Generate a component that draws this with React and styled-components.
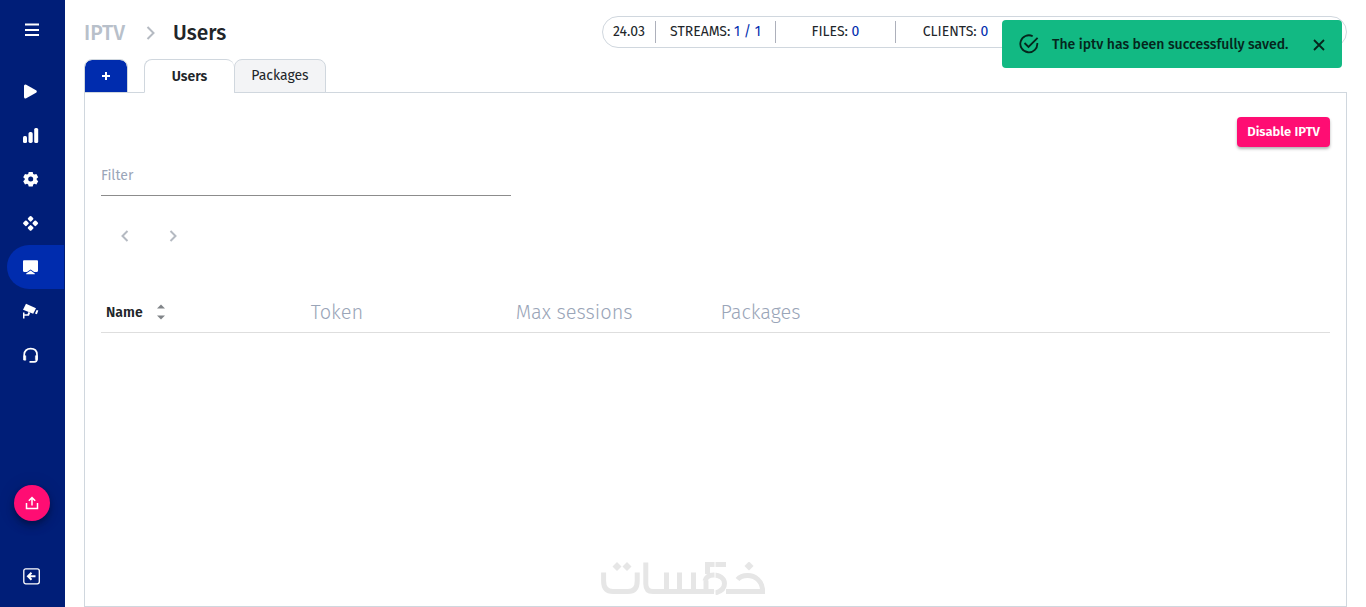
import React, { useState } from 'react';
import styled, { createGlobalStyle } from 'styled-components';

const GlobalStyle = createGlobalStyle`
  * {
    box-sizing: border-box;
  }
  body {
    margin: 0;
    background: #fff;
    color: #212529;
    font-family: "Fira Sans", Roboto, "Noto Sans", sans-serif;
    font-size: 14px;
    line-height: 20px;
  }
  button, input {
    font-family: inherit;
    font-size: inherit;
    color: inherit;
  }
  button {
    border: 0;
    padding: 0;
    background: none;
    cursor: pointer;
  }
  a {
    color: inherit;
    text-decoration: none;
  }
  svg {
    display: block;
  }
`;

const Layout = styled.div`
  display: flex;
  min-height: 100vh;
`;

const Sidebar = styled.aside`
  display: flex;
  flex-direction: column;
  align-items: center;
  flex: 0 0 65px;
  padding: 20px 1px 20px 0;
  background: #001e78;
  color: #fff;
`;

const MenuButton = styled.button`
  display: flex;
  align-items: center;
  justify-content: center;
  width: 40px;
  height: 20px;
`;

const Nav = styled.nav`
  align-self: stretch;
  display: flex;
  flex-direction: column;
  flex: 1;
  padding-left: 7px;
  margin-top: 29px;
`;

const NavLink = styled.a`
  display: flex;
  align-items: center;
  height: 44px;
  padding-left: 16px;
  border-radius: 22px 0 0 22px;
  background: ${({ $active }) => ($active ? '#002cae' : 'transparent')};
`;

const UploadButton = styled.button`
  display: flex;
  align-items: center;
  justify-content: center;
  width: 36px;
  height: 36px;
  margin-bottom: 46px;
  border-radius: 50%;
  background: #ff0d73;
  box-shadow: 0 3px 5px rgba(0, 0, 0, 0.2), 0 6px 10px rgba(0, 0, 0, 0.14), 0 1px 18px rgba(0, 0, 0, 0.12);
`;

const Main = styled.main`
  display: flex;
  flex-direction: column;
  flex: 1;
  min-width: 0;
  padding: 16px 19px 0;
`;

const Header = styled.header`
  display: flex;
  justify-content: space-between;
  align-items: center;
  height: 32px;
`;

const Breadcrumb = styled.div`
  display: flex;
  align-items: center;
  gap: 16px;
  padding-top: 2px;
  font-size: 21px;
  line-height: 32px;
  font-weight: 500;

  a {
    color: #b8c0ca;
  }
  h1 {
    margin: 0;
    font: inherit;
  }
`;

const StatusBar = styled.div`
  display: flex;
  align-items: center;
  flex: 0 1 745px;
  height: 32px;
  border: 1px solid #d0d7de;
  border-radius: 16px;
`;

const Status = styled.div`
  flex: 0 0 ${({ $width }) => $width || 120}px;
  border-right: 1px solid ${({ $last }) => ($last ? 'transparent' : '#adb0bb')};
  text-align: center;
  line-height: 22px;

  span {
    color: #002cae;
  }
`;

const Tabs = styled.div`
  position: relative;
  display: flex;
  align-items: flex-end;
  margin-top: 11px;
  margin-bottom: -1px;
`;

const AddButton = styled.button`
  display: flex;
  align-items: center;
  justify-content: center;
  width: 44px;
  height: 34px;
  margin-right: 16px;
  border: 1px solid #d0d7de;
  border-radius: 8px 8px 0 0;
  background: #002cae;
  background-clip: padding-box;
  color: #fff;
`;

const Tab = styled.button`
  min-width: ${({ $active }) => ($active ? 90 : 92)}px;
  height: 34px;
  padding: 0 16px ${({ $active }) => ($active ? 0 : 2)}px;
  border: 1px solid #d0d7de;
  border-bottom-color: ${({ $active }) => ($active ? '#fff' : '#d0d7de')};
  border-right-width: ${({ $active }) => ($active ? 0 : 1)}px;
  border-radius: 8px 8px 0 0;
  background: ${({ $active }) => ($active ? '#fff' : '#f3f4f6')};
  font-weight: ${({ $active }) => ($active ? 600 : 400)};
`;

const Panel = styled.section`
  display: flex;
  flex-direction: column;
  flex: 1;
  padding: 24px 16px 11px;
  border: 1px solid #d0d7de;
`;

const DisableButton = styled.button`
  align-self: flex-end;
  height: 30px;
  padding: 0 10px 2px;
  border-radius: 4px;
  background: #ff0d73;
  color: #fff;
  font-size: 13px;
  font-weight: 600;
  box-shadow: 0 2px 3px rgba(0, 0, 0, 0.3);
`;

const FilterInput = styled.input`
  width: 410px;
  max-width: 100%;
  height: 42px;
  margin-top: 7px;
  padding: 2px 0 0;
  border: 0;
  border-bottom: 1px solid #8c8c8c;
  border-radius: 0;
  outline: 0;
  background: none;

  &::placeholder {
    color: #9aa5b8;
    opacity: 1;
  }
`;

const Pager = styled.div`
  display: flex;
  margin-top: 16px;
`;

const PagerButton = styled.button`
  display: flex;
  align-items: center;
  justify-content: center;
  width: 48px;
  height: 48px;
  color: #b5bac2;
`;

const UsersTable = styled.table`
  width: 100%;
  margin-top: 32px;
  table-layout: fixed;
  border-collapse: collapse;

  th {
    height: 40px;
    padding: 0 5px;
    border-bottom: 1px solid #dedede;
    color: #9aa5b8;
    text-align: left;
    font-size: 20px;
    font-weight: 300;
  }
`;

const SortButton = styled.button`
  display: flex;
  align-items: center;
  gap: 13px;
  color: #212529;
  font-size: 14px;
  line-height: 20px;
  font-weight: 600;

  span {
    padding-top: 2px;
  }
`;

const Watermark = styled.div`
  display: flex;
  align-items: flex-end;
  justify-content: center;
  flex: 1;
  padding-right: 66px;
  color: #e6e6e6;
`;

const Toast = styled.div`
  position: fixed;
  top: 20px;
  right: 24px;
  display: flex;
  align-items: center;
  width: 340px;
  height: 48px;
  padding: 0 16px 0 17px;
  border-radius: 4px;
  background: #12b983;
  color: #05261c;
  font-weight: 500;

  p {
    flex: 1;
    margin: 0 0 0 13px;
    padding-top: 2px;
    white-space: nowrap;
  }
`;

const PlayIcon = () => (
  <svg width="16" height="16" viewBox="0 0 16 16">
    <path d="M2.500 3v11l9.800-5.500z" fill="currentColor" stroke="currentColor" strokeWidth="3" strokeLinejoin="round" />
  </svg>
);

const StatsIcon = () => (
  <svg width="16" height="16" viewBox="0 0 16 16" fill="currentColor">
    <rect x="0" y="9" width="4" height="7" rx="1.5" />
    <rect x="5.5" y="5" width="4.2" height="11" rx="1.7" />
    <rect x="11.2" y="1" width="4" height="15" rx="1.5" />
  </svg>
);

const SettingsIcon = () => (
  <svg width="16" height="16" viewBox="0 0 16 16" fill="currentColor">
    <path
      fillRule="evenodd"
      d="M5.700 1h4l.5 2 1.200.6 2-.6 1.800 3.200-1.500 1.400v1.200l1.500 1.400-1.800 3.200-2-.6-1.200.6-.5 2h-4l-.5-2-1.200-.6-2 .6L.2 10.200l1.500-1.400V7.600L.2 6.200 2 3l2 .6L5.200 3zM7.700 5.600a2.500 2.500 0 1 0 0 5 2.500 2.500 0 0 0 0-5z"
    />
  </svg>
);

const ModulesIcon = () => (
  <svg width="16" height="16" viewBox="0 0 16 16" fill="currentColor" stroke="currentColor" strokeWidth="2.2" strokeLinejoin="round">
    <path d="M7.600 2.100l1.700 1.700-1.700 1.700-1.700-1.700z" />
    <path d="M7.600 11.200l1.700 1.700-1.700 1.700-1.700-1.700z" />
    <path d="M2.900 6.600l1.700 1.700L2.900 10 1.200 8.300z" />
    <path d="M12.300 6.600L14 8.300 12.300 10l-1.700-1.700z" />
  </svg>
);

const ScreenIcon = () => (
  <svg width="16" height="16" viewBox="0 0 16 16" fill="currentColor">
    <path d="M1.200 1.200h12.600c.8 0 1.200.5 1.200 1.200v9.400c0 .7-.4 1.200-1.200 1.200h-2.600L7.600 10.600 4 13H1.200C.4 13 0 12.500 0 11.800V2.400c0-.7.4-1.200 1.200-1.200z" />
    <path d="M7.600 11.600l4.200 2.800v.8H3.200v-.8z" />
  </svg>
);

const CameraIcon = () => (
  <svg width="16" height="16" viewBox="0 0 16 16" fill="currentColor">
    <path d="M3 .8l10 4.400-2.800 5.600L0 6.800z" />
    <path d="M13.600 7l1.700.5-1.400 3.800-1.900-.8z" />
    <path d="M0 9.500h1.500v1.800h3l.9-2.200 1.800.7-1.200 3H1.500V15.500H0z" />
  </svg>
);

const SupportIcon = () => (
  <svg width="16" height="16" viewBox="0 0 16 16" fill="none" stroke="currentColor">
    <path d="M1.200 13V7.800C1.200 3.800 4 1.700 7.600 1.700S14 3.800 14 7.800v4.300c0 1.800-1.200 2.800-2.800 2.800H6.500" strokeWidth="1.700" />
    <path d="M.8 8.700h2v4.500h-2z M14.400 8.700h-2v4h2z" fill="currentColor" strokeWidth="0.500" />
  </svg>
);

const KhamsatLogo = () => (
  <svg width="164" height="33" viewBox="0 0 164 33" fill="none" stroke="currentColor" strokeWidth="5" role="img" aria-label="Khamsat">
    <path d="M2.600 10.500V19C2.600 26 6 29.500 12 29.500H27C33 29.500 36.200 26 36.200 19V10.500" />
    <path d="M44.800.5V22C44.800 27 47 29.500 52 29.500H113" />
    <path d="M65.500 10.500V29M78.500 10.500V29M92.500 10.500V29" />
    <path d="M105 29.500V18.500" />
    <path d="M106.500 12V2.500H125" />
    <path d="M104 19C105 15.500 108 13 112.500 13C119 13 123.500 16.500 123.500 21.500C123.500 26 120 29.500 114 31" />
    <path d="M125 29.500H161.500V27C160.500 19 154.500 13.500 146.500 13.500C142.500 13.500 139 14.500 136.500 17.500" />
    <path d="M16 0l4.500 4.500L16 9l-4.500-4.500zM26 0l4.500 4.500L26 9l-4.500-4.500zM148-.5l4.500 4.500L148 8.500l-4.500-4.500z" fill="currentColor" stroke="none" />
    <path d="M114 0v17M114 26v7" stroke="#fff" strokeWidth="1" />
  </svg>
);

const navItems = [
  { label: 'Play', Icon: PlayIcon },
  { label: 'Statistics', Icon: StatsIcon },
  { label: 'Settings', Icon: SettingsIcon },
  { label: 'Modules', Icon: ModulesIcon },
  { label: 'IPTV', Icon: ScreenIcon, active: true },
  { label: 'Cameras', Icon: CameraIcon },
  { label: 'Support', Icon: SupportIcon },
];

function App() {
  const [filter, setFilter] = useState('');
  const [saved, setSaved] = useState(true);

  return (
    <Layout>
      <GlobalStyle />
      <Sidebar>
        <MenuButton aria-label="Menu">
          <svg width="14" height="14" viewBox="0 0 14 14" stroke="currentColor" strokeWidth="2">
            <path d="M0 1.500h14M0 7h14M0 12h14" />
          </svg>
        </MenuButton>
        <Nav>
          {navItems.map(({ label, Icon, active }) => (
            <NavLink key={label} href="#" aria-label={label} $active={active}>
              <Icon />
            </NavLink>
          ))}
        </Nav>
        <UploadButton aria-label="Upload">
          <svg width="14" height="14" viewBox="0 0 14 14" fill="none" stroke="currentColor" strokeWidth="1.500">
            <path d="M1.500 7v5.500h11V7M7 9.500V2M3.800 4.800L7 1.600l3.200 3.200" />
          </svg>
        </UploadButton>
        <MenuButton aria-label="Collapse">
          <svg width="18" height="18" viewBox="0 0 18 18" fill="none" stroke="currentColor" strokeWidth="1.300">
            <rect x="0.800" y="0.800" width="15.500" height="15" rx="2" />
            <path d="M12.500 8.300H5.500M8.500 4.800L5 8.300l3.500 3.500" strokeWidth="2" />
          </svg>
        </MenuButton>
      </Sidebar>

      <Main>
        <Header>
          <Breadcrumb>
            <a href="#">IPTV</a>
            <svg width="16" height="16" viewBox="0 0 16 16" fill="none" stroke="#b5bac2" strokeWidth="2">
              <path d="M6.500 2l6 6-6 6" />
            </svg>
            <h1>Users</h1>
          </Breadcrumb>
          <StatusBar>
            <Status $width={53}>24.03</Status>
            <Status>STREAMS: <span>1 / 1</span></Status>
            <Status>FILES: <span>0</span></Status>
            <Status $last>CLIENTS: <span>0</span></Status>
          </StatusBar>
        </Header>

        <Tabs>
          <AddButton aria-label="Add">
            <svg width="8" height="8" viewBox="0 0 8 8" stroke="currentColor" strokeWidth="2">
              <path d="M4 0v8M0 4h8" />
            </svg>
          </AddButton>
          <Tab $active>Users</Tab>
          <Tab>Packages</Tab>
        </Tabs>

        <Panel>
          <DisableButton>Disable IPTV</DisableButton>
          <FilterInput
            aria-label="Filter"
            placeholder="Filter"
            value={filter}
            onChange={(e) => setFilter(e.target.value)}
          />
          <Pager>
            <PagerButton aria-label="Previous page">
              <svg width="12" height="12" viewBox="0 0 12 12" fill="none" stroke="currentColor" strokeWidth="2">
                <path d="M8.500 1l-5 5 5 5" />
              </svg>
            </PagerButton>
            <PagerButton aria-label="Next page">
              <svg width="12" height="12" viewBox="0 0 12 12" fill="none" stroke="currentColor" strokeWidth="2">
                <path d="M3.500 1l5 5-5 5" />
              </svg>
            </PagerButton>
          </Pager>
          <UsersTable>
            <thead>
              <tr>
                <th>
                  <SortButton>
                    <span>Name</span>
                    <svg width="10" height="16" viewBox="0 0 10 16" fill="#808488">
                      <path d="M5 .5l4 4H1zM5 15.500l4-4H1z" />
                    </svg>
                  </SortButton>
                </th>
                <th>Token</th>
                <th>Max sessions</th>
                <th>Packages</th>
                <th></th>
                <th></th>
              </tr>
            </thead>
          </UsersTable>
          <Watermark>
            <KhamsatLogo />
          </Watermark>
        </Panel>
      </Main>

      {saved && (
        <Toast role="status">
          <svg width="20" height="20" viewBox="0 0 20 20" fill="none" stroke="currentColor" strokeWidth="1.800">
            <path d="M13.700 2.200A8.500 8.500 0 1 0 18.300 9" />
            <path d="M5.500 9l4 4L18.600 3.800" />
          </svg>
          <p>The iptv has been successfully saved.</p>
          <button aria-label="Close" onClick={() => setSaved(false)}>
            <svg width="14" height="14" viewBox="0 0 14 14" stroke="currentColor" strokeWidth="1.800">
              <path d="M2 3l10 10M12 3L2 13" />
            </svg>
          </button>
        </Toast>
      )}
    </Layout>
  );
}

export default App;
